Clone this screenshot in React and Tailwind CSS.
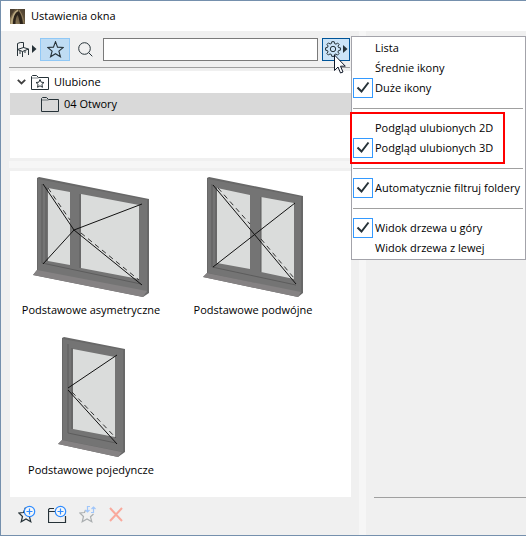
import React from "react";

const STAR = "M10 0.8 L12.4 7.2 L19.200 7.600 L14 11.900 L15.800 18.600 L10 15 L4.200 18.600 L6 11.900 L0.800 7.600 L7.600 7.200 Z";

function AppIcon() {
  return (
    <svg width="15" height="15" viewBox="0 0 15 15" aria-hidden="true">
      <defs>
        <linearGradient id="sepia" x1="0" y1="1" x2="1" y2="0">
          <stop offset="0" stopColor="#a08d68" />
          <stop offset="0.5" stopColor="#6b5b43" />
          <stop offset="1" stopColor="#4a3d2d" />
        </linearGradient>
      </defs>
      <rect width="15" height="15" fill="url(#sepia)" />
      <path d="M0 0 H5 L2 5 L0 9 Z" fill="#4a3e2f" />
      <path d="M3 15 C3 8 5 3 8 2 C11 4 12 9 13 15 H10 C9 10 8.500 7 7.500 6 C6 8 5.500 11 5.500 15 Z" fill="#2b2319" />
      <path d="M1.500 15 C2 8 4 3 8 1.200" stroke="#b9a880" strokeWidth="1.5" fill="none" />
      <path d="M9 1 C12 5 13 9 14 14" stroke="#8f7d5b" strokeWidth="1" fill="none" />
    </svg>
  );
}

function ChairIcon() {
  return (
    <svg width="12" height="17" viewBox="0 0 12 17" fill="none" stroke="#263238" strokeWidth="1" strokeLinejoin="round" aria-hidden="true">
      <path d="M0.500 15 V2.500 Q3 1 6.500 1.500 V7" />
      <path d="M0.500 8.500 L6.500 6.500 L11.500 8 L5.500 10.500 Z" />
      <path d="M5.500 10.500 V16 M11.500 8 V14 M3 9.500 V13 M8 9.500 V12" />
    </svg>
  );
}

function Triangle() {
  return (
    <svg width="5" height="8" viewBox="0 0 5 8" aria-hidden="true">
      <path d="M0 0 L4.500 4 L0 8 Z" fill="#263238" />
    </svg>
  );
}

function StarIcon() {
  return (
    <svg width="17" height="17" viewBox="0 0 20 20" aria-hidden="true">
      <path d={STAR} fill="none" stroke="#263238" strokeWidth="1.3" />
    </svg>
  );
}

function SearchIcon() {
  return (
    <svg width="15" height="15" viewBox="0 0 15 15" fill="none" stroke="#263238" strokeWidth="1" aria-hidden="true">
      <circle cx="6.500" cy="6.500" r="5.800" />
      <path d="M10.700 10.700 L14.300 14.300" />
    </svg>
  );
}

function GearIcon() {
  return (
    <svg width="16" height="16" viewBox="0 0 16 16" fill="none" stroke="#263238" strokeWidth="1" strokeLinejoin="round" aria-hidden="true">
      <path d="M6.800 0.700 H9.200 L9.600 2.600 L11 3.200 L12.600 2 L14.100 3.500 L13 5.100 L13.500 6.500 L15.400 6.800 V9.200 L13.500 9.600 L12.900 11 L14 12.600 L12.500 14.100 L10.900 13 L9.600 13.500 L9.200 15.400 H6.800 L6.400 13.500 L5 12.900 L3.400 14 L1.900 12.500 L3 10.900 L2.500 9.600 L0.600 9.200 V6.800 L2.500 6.400 L3.100 5 L2 3.400 L3.500 1.900 L5.100 3 L6.400 2.500 Z" />
      <circle cx="8" cy="8" r="2.700" />
    </svg>
  );
}

function FolderIcon({ starred }) {
  return (
    <svg width="18" height="15" viewBox="0 0 18 15" fill="none" stroke="#263238" strokeWidth="1" aria-hidden="true">
      <path d="M0.500 14 V1.500 L1.500 0.500 H5.500 L7.500 2.500 H17.500 V14.500 H0.500 Z" />
      <path d="M0.500 3 H7.500" strokeOpacity="0.6" />
      {starred && (
        <path d="M9 4.500 L10.200 7.200 L13 7.500 L10.900 9.400 L11.500 12.300 L9 10.800 L6.500 12.300 L7.100 9.400 L5 7.500 L7.800 7.200 Z" />
      )}
    </svg>
  );
}

function PlusBadge({ cx, cy }) {
  return (
    <g stroke="#2f8cff" fill="none" strokeWidth="1.200">
      <circle cx={cx} cy={cy} r="5.200" fill="#f8f8f8" />
      <path d={`M${cx - 3} ${cy} H${cx + 3} M${cx} ${cy - 3} V${cy + 3}`} />
    </g>
  );
}

function AddStarIcon() {
  return (
    <svg width="18" height="19" viewBox="0 0 18 19" fill="none" aria-hidden="true">
      <path d="M7.500 2.500 L5.500 7.500 L0.800 8 L4.500 11.500 L3.200 16.800 L8 14 L12.800 16.800 L11.500 11.800" stroke="#263238" strokeWidth="1.200" />
      <PlusBadge cx={11.5} cy={6.5} />
    </svg>
  );
}

function AddFolderIcon() {
  return (
    <svg width="19" height="19" viewBox="0 0 19 19" fill="none" aria-hidden="true">
      <path d="M7 6.500 H0.500 V4.500 L1.500 3.500 H6 M0.500 6.500 V17.500 H17.500 V11" stroke="#263238" strokeWidth="1.200" />
      <PlusBadge cx={12.5} cy={6.5} />
    </svg>
  );
}

function UpdateStarIcon() {
  return (
    <svg width="18" height="19" viewBox="0 0 18 19" fill="none" aria-hidden="true">
      <path d="M6.500 5 L5.500 7.500 L0.800 8 L4.500 11.500 L3.200 16.800 L8 14 L12.800 16.800 L11.500 11.800 L14.500 9" stroke="#aaaeb0" strokeWidth="1.200" />
      <path d="M11 1.500 H8.500 V7 M6.500 5 L8.500 7 L10.500 5 M12 7.500 H14.500 V2 M12.500 4 L14.500 2 L16.500 4" stroke="#a0c6fa" strokeWidth="1.200" />
    </svg>
  );
}

function DeleteIcon() {
  return (
    <svg width="14" height="15" viewBox="0 0 14 15" aria-hidden="true">
      <path d="M1 1 L13 14 M13 1 L1 14" stroke="#f9a99c" strokeWidth="2" />
    </svg>
  );
}

function AsymmetricWindow() {
  return (
    <svg width="122" height="124" viewBox="30 175 122 124" aria-hidden="true">
      <path d="M37 178 L39 177 L149 199 V293 L143 297 L33 275 L37 270 Z" fill="#686868" />
      <path d="M38 179 L147 200 V293 L38 271 Z" fill="#747474" />
      <path d="M37 270 L147 291 L143 297 L33 275 Z" fill="#858283" />
      <path d="M48 188 L70 192 V265 L48 261 Z M81 194 L139 205 V279 L81 268 Z" fill="#dadcdb" />
      <path d="M42 184 V263 L141 284 M46 187 V261 M80 194 V268" stroke="#5c5c5c" strokeWidth="1" fill="none" />
      <path d="M43 184 L74 230 L43 264 M142 204 L74 230 L142 285" stroke="#111" strokeWidth="1" fill="none" />
      <path d="M48 188 L70 220 M81 233 L139 280" stroke="#333" strokeWidth="1" strokeDasharray="5 4" fill="none" />
    </svg>
  );
}

function DoubleWindow() {
  return (
    <svg width="122" height="124" viewBox="192 175 122 124" aria-hidden="true">
      <path d="M207 178 L209 177 L303 196 V293 L298 297 L203 277 L207 273 Z" fill="#686868" />
      <path d="M208 179 L301 197 V293 L208 273 Z" fill="#747474" />
      <path d="M207 273 L301 292 L298 297 L203 277 Z" fill="#858283" />
      <path d="M217 188 L250 195 V269 L217 263 Z M261 197 L294 203 V279 L261 272 Z" fill="#dadcdb" />
      <path d="M212 184 V267 L296 285 M216 188 V263 M261 197 V272" stroke="#5c5c5c" strokeWidth="1" fill="none" />
      <path d="M213 185 L296 284 M213 267 L295 203" stroke="#111" strokeWidth="1" fill="none" />
      <path d="M218 188 L250 224 M261 239 L294 278" stroke="#333" strokeWidth="1" strokeDasharray="5 4" fill="none" />
    </svg>
  );
}

function SingleWindow() {
  return (
    <svg width="122" height="124" viewBox="30 335 122 124" aria-hidden="true">
      <path d="M62 338 L64 337 L125 349 V452 L118 457 L58 444 L62 440 Z" fill="#686868" />
      <path d="M63 339 L123 350 V452 L63 440 Z" fill="#747474" />
      <path d="M62 440 L122 452 L118 457 L58 444 Z" fill="#858283" />
      <path d="M73 349 L115 357 V437 L73 429 Z" fill="#dadcdb" />
      <path d="M68 344 V433 L116 443 M72 348 V429" stroke="#5c5c5c" strokeWidth="1" fill="none" />
      <path d="M117 355 L68 388 M68 390 L117 444" stroke="#111" strokeWidth="1" fill="none" />
      <path d="M72 392 L116 438" stroke="#333" strokeWidth="1" strokeDasharray="5 4" fill="none" />
    </svg>
  );
}

const favorites = [
  { name: "Podstawowe asymetryczne", Drawing: AsymmetricWindow },
  { name: "Podstawowe podwójne", Drawing: DoubleWindow },
  { name: "Podstawowe pojedyncze", Drawing: SingleWindow },
];

function MenuItem({ label, checked = false }) {
  return (
    <label className="flex h-5 items-center gap-0.5 whitespace-nowrap">
      <span className="grid size-5 shrink-0">
        <input
          type="checkbox"
          defaultChecked={checked}
          className="peer col-start-1 row-start-1 size-5 appearance-none checked:border checked:border-[#3399ff]"
        />
        <svg viewBox="0 0 20 20" className="pointer-events-none invisible col-start-1 row-start-1 size-5 peer-checked:visible" aria-hidden="true">
          <path d="M4.500 9.500 L8.500 13.500 L15.500 4.500" fill="none" stroke="#263238" strokeWidth="2" />
        </svg>
      </span>
      {label}
    </label>
  );
}

function Separator() {
  return (
    <div className="flex h-5 items-center pr-px" role="separator">
      <div className="h-px w-full bg-[#a0a0a0]" />
    </div>
  );
}

function SettingsMenu() {
  return (
    <div className="absolute top-[35px] left-[350px] w-[175px] border border-[#a3a3aa] bg-white p-px">
      <MenuItem label="Lista" />
      <MenuItem label="Średnie ikony" />
      <MenuItem label="Duże ikony" checked />
      <Separator />
      <div className="relative">
        <MenuItem label="Podgląd ulubionych 2D" />
        <MenuItem label="Podgląd ulubionych 3D" checked />
        <div className="pointer-events-none absolute -top-1.5 -left-[3px] h-[52px] w-[155px] border-2 border-[#ff0000]" />
      </div>
      <Separator />
      <MenuItem label="Automatycznie filtruj foldery" checked />
      <Separator />
      <MenuItem label="Widok drzewa u góry" checked />
      <MenuItem label="Widok drzewa z lewej" />
    </div>
  );
}

function Pointer() {
  return (
    <svg width="12" height="20" viewBox="0 0 12 20" className="pointer-events-none absolute top-[53px] left-[333px]" aria-hidden="true">
      <path d="M0.500 1 V16.500 L4 13 L6.500 19 L9 18 L6.500 12.200 H11.300 Z" fill="#fff" stroke="#101828" strokeWidth="1" />
    </svg>
  );
}

export default function App() {
  return (
    <div className="relative flex h-screen flex-col border-y border-l border-[#7590ad] bg-[#f0f0f0] font-['Open_Sans','Noto_Sans',sans-serif] text-[11px] leading-4 text-black">
      <header className="flex h-[30px] shrink-0 items-center gap-1.5 bg-white pl-[9px]">
        <AppIcon />
        <h1>Ustawienia okna</h1>
      </header>
      <div className="flex min-h-0 flex-1">
        <main className="flex w-[358px] shrink-0 flex-col pr-2 pl-2">
          <div className="mr-px mb-[3px] flex h-[37px] items-center border-b border-[#a0a0a0] pt-1 pb-1 pl-2">
            <button aria-label="Elementy" className="flex items-center gap-[3px]">
              <ChairIcon />
              <Triangle />
            </button>
            <button aria-label="Ulubione" className="ml-[3px] flex h-[23px] w-[30px] items-center justify-center border border-[#90c8f6] bg-[#bfdcf3]">
              <StarIcon />
            </button>
            <button aria-label="Szukaj" className="ml-2">
              <SearchIcon />
            </button>
            <input type="text" aria-label="Szukana nazwa" className="ml-2.5 h-[23px] min-w-0 flex-1 border border-[#7a7a7a] bg-white px-1" />
            <button aria-label="Opcje widoku" className="ml-1 flex h-[23px] w-7 items-center justify-center gap-0.5 border border-[#005499] bg-[#cce4f7]">
              <GearIcon />
              <Triangle />
            </button>
          </div>
          <ul className="ml-px h-[87px] shrink-0 bg-white">
            <li className="flex h-[22px] items-center pl-[7px]">
              <svg width="9" height="6" viewBox="0 0 9 6" className="mr-[5px]" aria-hidden="true">
                <path d="M0.800 0.800 L4.500 4.500 L8.200 0.800" fill="none" stroke="#404040" strokeWidth="1.800" />
              </svg>
              <FolderIcon starred />
              <span className="ml-[5px]">Ulubione</span>
            </li>
            <li className="flex h-[22px] items-center bg-[#d9d9d9] pl-[31px]">
              <FolderIcon />
              <span className="ml-[5px]">04 Otwory</span>
            </li>
          </ul>
          <div className="my-[3px] h-[7px] shrink-0 bg-[#f6f6f6]" />
          <ul className="ml-px grid flex-1 auto-rows-[160px] grid-cols-[162px_162px] bg-white pt-[4px]">
            {favorites.map(({ name, Drawing }) => (
              <li key={name} className="flex flex-col items-center gap-[3px] whitespace-nowrap">
                <Drawing />
                {name}
              </li>
            ))}
          </ul>
          <footer className="flex h-[38px] shrink-0 items-center gap-3 pb-1 pl-[9px]">
            <button aria-label="Dodaj do ulubionych"><AddStarIcon /></button>
            <button aria-label="Nowy folder"><AddFolderIcon /></button>
            <button aria-label="Aktualizuj" disabled><UpdateStarIcon /></button>
            <button aria-label="Usuń" disabled><DeleteIcon /></button>
          </footer>
        </main>
        <div className="w-[7px] shrink-0 bg-[#f6f6f6]" />
        <aside className="flex min-w-0 flex-1 flex-col justify-end pb-[37px] pl-2">
          <div className="h-px bg-[#a0a0a0]" />
        </aside>
      </div>
      <SettingsMenu />
      <Pointer />
    </div>
  );
}
